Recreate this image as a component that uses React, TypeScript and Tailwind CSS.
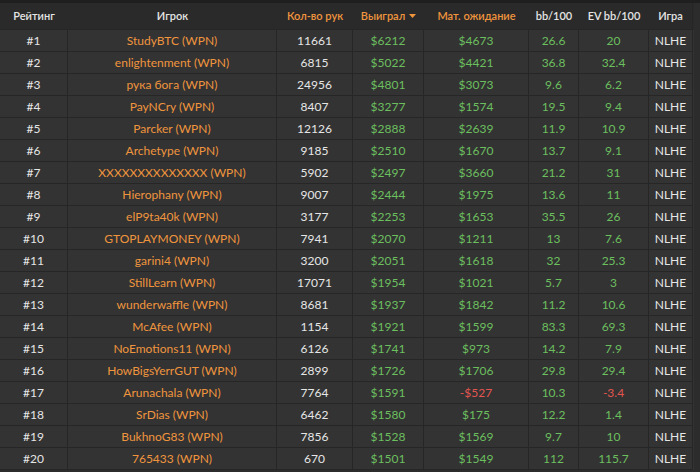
import React from "react";

type Row = [string, string, string, string, string, string];

const rows: Row[] = [
  ["StudyBTC", "11661", "$6212", "$4673", "26.6", "20"],
  ["enlightenment", "6815", "$5022", "$4421", "36.8", "32.4"],
  ["рука бога", "24956", "$4801", "$3073", "9.6", "6.2"],
  ["PayNCry", "8407", "$3277", "$1574", "19.5", "9.4"],
  ["Parcker", "12126", "$2888", "$2639", "11.9", "10.9"],
  ["Archetype", "9185", "$2510", "$1670", "13.7", "9.1"],
  ["XXXXXXXXXXXXXX", "5902", "$2497", "$3660", "21.2", "31"],
  ["Hierophany", "9007", "$2444", "$1975", "13.6", "11"],
  ["elP9ta40k", "3177", "$2253", "$1653", "35.5", "26"],
  ["GTOPLAYMONEY", "7941", "$2070", "$1211", "13", "7.6"],
  ["garini4", "3200", "$2051", "$1618", "32", "25.3"],
  ["StillLearn", "17071", "$1954", "$1021", "5.7", "3"],
  ["wunderwaffle", "8681", "$1937", "$1842", "11.2", "10.6"],
  ["McAfee", "1154", "$1921", "$1599", "83.3", "69.3"],
  ["NoEmotions11", "6126", "$1741", "$973", "14.2", "7.9"],
  ["HowBigsYerrGUT", "2899", "$1726", "$1706", "29.8", "29.4"],
  ["Arunachala", "7764", "$1591", "-$527", "10.3", "-3.4"],
  ["SrDias", "6462", "$1580", "$175", "12.2", "1.4"],
  ["BukhnoG83", "7856", "$1528", "$1569", "9.7", "10"],
  ["765433", "670", "$1501", "$1549", "112", "115.7"],
];

const grid =
  "grid grid-cols-[68px_209px_76px_71px_105px_50px_70px_44px]";
const cell =
  "flex items-center justify-center border-r border-b border-[#262626] whitespace-nowrap";
const head = "flex items-center justify-center border-b border-[#262626] whitespace-nowrap";

const val = (s: string) =>
  s.startsWith("-") ? "text-[#e25550]" : "text-[#6cbf5f]";

export default function App() {
  return (
    <div
      className="w-[700px] h-[472px] overflow-hidden bg-[#2c2c2c] border-t-[3px] border-[#1f1f1f]"
      style={{ fontFamily: "Lato, 'Noto Sans', sans-serif" }}
    >
      <div className="w-[694px]">
        <div
          className={`${grid} h-[27px] bg-[#2a2a2a] text-[11px] font-semibold text-[#e4e4e4]`}
        >
          <div className={head}>Рейтинг</div>
          <div className={head}>Игрок</div>
          <div className={`${head} text-[#f0953e]`}>Кол-во рук</div>
          <div className={`${head} text-[#f0953e]`}>
            Выиграл
            <svg width="7" height="4" viewBox="0 0 7 4" className="ml-[4px]">
              <path d="M0 0H7L3.5 4Z" fill="#f0953e" />
            </svg>
          </div>
          <div className={`${head} text-[#f0953e]`}>Мат. ожидание</div>
          <div className={head}>bb/100</div>
          <div className={head}>EV bb/100</div>
          <div className={`${head} border-r`}>Игра</div>
        </div>
        {rows.map((r, i) => (
          <div
            key={i}
            className={`${grid} h-[22px] bg-[#333333] text-[12px] text-[#e6e6e6]`}
          >
            <div className={cell}>#{i + 1}</div>
            <div className={`${cell} text-[#f0953e]`}>{r[0]} (WPN)</div>
            <div className={cell}>{r[1]}</div>
            <div className={`${cell} ${val(r[2])}`}>{r[2]}</div>
            <div className={`${cell} ${val(r[3])}`}>{r[3]}</div>
            <div className={`${cell} ${val(r[4])}`}>{r[4]}</div>
            <div className={`${cell} ${val(r[5])}`}>{r[5]}</div>
            <div className={cell}>NLHE</div>
          </div>
        ))}
      </div>
    </div>
  );
}
